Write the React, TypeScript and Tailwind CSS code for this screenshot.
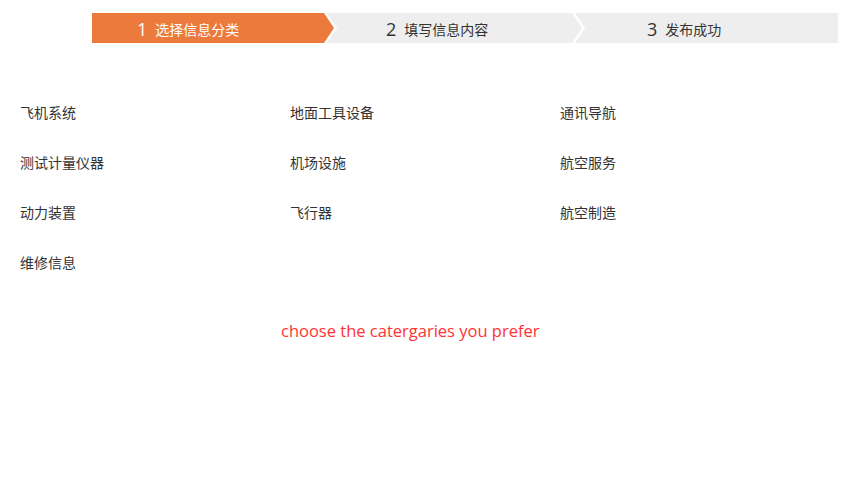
const steps = [
  { n: '1', label: '选择信息分类', active: true },
  { n: '2', label: '填写信息内容', active: false },
  { n: '3', label: '发布成功', active: false },
];

const categories = [
  '飞机系统',
  '地面工具设备',
  '通讯导航',
  '测试计量仪器',
  '机场设施',
  '航空服务',
  '动力装置',
  '飞行器',
  '航空制造',
  '维修信息',
];

export default function App() {
  return (
    <div
      className="w-[863px] h-[480px] bg-white text-[#333]"
      style={{ fontFamily: '"Open Sans", "Noto Sans CJK SC", sans-serif' }}
    >
      {/* Step bar */}
      <div className="pt-[13px] pl-[92px] flex">
        <div
          className="w-[242px] h-[30px] bg-[#ed7a3d] text-white flex items-center pt-[2px] pl-[45px]"
          style={{ clipPath: 'polygon(0 0, 232px 0, 242px 50%, 232px 100%, 0 100%)' }}
        >
          <span className="text-[18px] leading-none mr-[8px]">{steps[0].n}</span>
          <span className="text-[14px]">{steps[0].label}</span>
        </div>
        <div
          className="-ml-[7px] w-[255px] h-[30px] bg-[#eeeeee] flex items-center pt-[2px] pl-[59px]"
          style={{ clipPath: 'polygon(0 0, 245px 0, 255px 50%, 245px 100%, 0 100%, 10px 50%)' }}
        >
          <span className="text-[18px] leading-none mr-[8px]">{steps[1].n}</span>
          <span className="text-[14px]">{steps[1].label}</span>
        </div>
        <div
          className="-ml-[7px] w-[263px] h-[30px] bg-[#eeeeee] flex items-center pt-[2px] pl-[72px]"
          style={{ clipPath: 'polygon(0 0, 100% 0, 100% 100%, 0 100%, 10px 50%)' }}
        >
          <span className="text-[18px] leading-none mr-[8px]">{steps[2].n}</span>
          <span className="text-[14px]">{steps[2].label}</span>
        </div>
      </div>

      {/* Categories */}
      <div className="mt-[60px] pl-[20px] grid grid-cols-[270px_270px_270px]">
        {categories.map((c) => (
          <div key={c} className="h-[50px] text-[14px] leading-[20px] cursor-pointer">
            {c}
          </div>
        ))}
      </div>

      <p className="mt-[16px] pl-[281px] text-[16.5px] text-[#ff3333]">
        choose the catergaries you prefer
      </p>
    </div>
  );
}
